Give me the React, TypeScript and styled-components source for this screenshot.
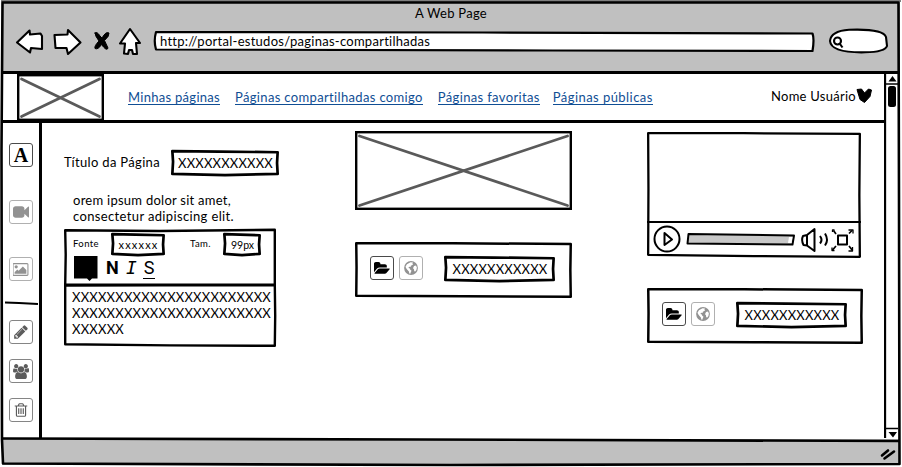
import React, { useLayoutEffect, useRef, useState } from 'react';
import styled, { createGlobalStyle } from 'styled-components';

const Global = createGlobalStyle`
  * { box-sizing: border-box; }
  body { margin: 0; background: #fff; overflow: hidden; }
`;

/* ---------- text ---------- */

const Run = styled.span<{ $size: number; $color: string; $weight: number; $underline: boolean }>`
  display: inline-block;
  font-family: Lato, "Open Sans", sans-serif;
  font-size: ${(p) => p.$size}px;
  font-weight: ${(p) => p.$weight};
  line-height: 16px;
  height: 16px;
  color: ${(p) => p.$color};
  white-space: nowrap;
  flex: none;
  border-bottom: ${(p) => (p.$underline ? `1px solid ${p.$color}` : 'none')};
`;

type TextProps = {
  children: string;
  width: number;
  size?: number;
  color?: string;
  weight?: number;
  underline?: boolean;
};

/* Tracks the letters out so that the run fills the given width. */
function Text({ children, width, size = 13, color = '#000', weight = 400, underline = false }: TextProps) {
  const ref = useRef<HTMLSpanElement>(null);
  const [spacing, setSpacing] = useState(0);
  useLayoutEffect(() => {
    const el = ref.current;
    if (!el) return;
    el.style.letterSpacing = '0px';
    const natural = el.getBoundingClientRect().width;
    const next = (width - natural) / children.length;
    el.style.letterSpacing = `${next}px`;
    setSpacing(next);
  }, [children, width, size]);
  return (
    <Run ref={ref} $size={size} $color={color} $weight={weight} $underline={underline} style={{ letterSpacing: spacing }}>
      {children}
    </Run>
  );
}

/* ---------- pen-drawn outline ---------- */

const OutlineSvg = styled.svg`
  position: absolute;
  inset: 0;
  overflow: visible;
  pointer-events: none;
`;

type Wobble = [number, number, number, number, number, number, number, number];

/* Wobble shifts: top-left, top, top-right, right, bottom-right, bottom, bottom-left, left. */
function Outline({ w, h, stroke = 3, wobble }: { w: number; h: number; stroke?: number; wobble: Wobble }) {
  const i = stroke / 2;
  const [tl, t, tr, r, br, b, bl, l] = wobble;
  const d = `M${i} ${i + tl}L${w * 0.45} ${i + t}L${w - i} ${i + tr}L${w - i + r} ${h / 2}L${w - i} ${h - i + br}L${w / 2} ${
    h - i + b
  }L${i} ${h - i + bl}L${i + l} ${h * 0.45}Z`;
  return (
    <OutlineSvg width={w} height={h}>
      <path d={d} fill="none" stroke="#000" strokeWidth={stroke} strokeLinejoin="round" />
    </OutlineSvg>
  );
}

/* ---------- browser window ---------- */

const Window = styled.div`
  width: 902px;
  height: 467px;
  padding: 2px;
  position: relative;
  display: flex;
  flex-direction: column;
  background: #fff;
`;

const Chrome = styled.header`
  height: 72px;
  flex: none;
  background: #c0c0c0;
  border-bottom: 3px solid #000;
  display: flex;
  flex-direction: column;
  padding-top: 3px;
`;

const TitleRow = styled.div`
  height: 22px;
  display: flex;
  justify-content: center;
`;

const ToolRow = styled.div`
  display: flex;
  padding-left: 13px;
  height: 34px;
`;

const NavIcons = styled.svg`
  flex: none;
  width: 138px;
  height: 34px;
`;

const Address = styled.div`
  position: relative;
  width: 661px;
  height: 20px;
  margin-top: 4px;
  padding: 1px 0 0 7px;
`;

const AddressShape = styled.svg`
  position: absolute;
  inset: 0;
  overflow: visible;
`;

const AddressText = styled.div`
  position: relative;
`;

const SearchPill = styled.svg`
  width: 60px;
  height: 28px;
  margin: 0 0 0 14px;
`;

const Body = styled.div`
  flex: 1;
  display: flex;
  min-height: 0;
  background: #fff;
`;

const Page = styled.div`
  width: 882px;
  flex: none;
  display: flex;
  flex-direction: column;
`;

const Scroll = styled.svg`
  width: 15px;
  height: 365px;
  flex: none;
`;

const StatusBar = styled.footer`
  height: 26px;
  flex: none;
  background: #c0c0c0;
  display: flex;
  justify-content: flex-end;
  align-items: center;
  padding-right: 3px;
  & > svg { margin-top: 3px; }
`;

/* ---------- page header ---------- */

const SiteHeader = styled.div`
  height: 49px;
  flex: none;
  display: flex;
  border-bottom: 3px solid #000;
  padding: 0 12px 0 15px;
`;

const Links = styled.nav`
  display: flex;
  padding: 14px 0 0 24px;
  flex: 1;
`;

const Link = styled.a<{ $gap: number }>`
  height: 16px;
  display: block;
  margin-right: ${(p) => p.$gap}px;
`;

const User = styled.div`
  display: flex;
  align-items: flex-start;
  padding-top: 14px;
`;

const PlaceholderSvg = styled.svg`
  display: block;
  flex: none;
`;

function Placeholder({ w, h }: { w: number; h: number }) {
  return (
    <PlaceholderSvg width={w} height={h}>
      <rect x="1.2" y="1.2" width={w - 2.4} height={h - 2.4} fill="#fff" stroke="#000" strokeWidth="2.4" />
      <path
        d={`M4.5 5L${w - 4.5} ${h - 4.5}M4.5 ${h - 4.5}L${w - 4.5} 5`}
        stroke="#5a5a5a"
        strokeWidth="2.8"
        strokeLinecap="round"
      />
    </PlaceholderSvg>
  );
}

/* ---------- sidebar ---------- */

const Workspace = styled.div`
  flex: 1;
  display: flex;
  min-height: 0;
`;

const Sidebar = styled.aside`
  width: 40px;
  flex: none;
  border-right: 3px solid #000;
  padding: 20px 0 0 7px;
  display: flex;
  flex-direction: column;
`;

const Tools = styled.div<{ $gap: number }>`
  display: flex;
  flex-direction: column;
  gap: ${(p) => p.$gap}px;
`;

const Divider = styled.svg`
  width: 35px;
  height: 5px;
  margin: 20px 0 14px -5px;
`;

const IconButton = styled.button<{ $tone: 'dark' | 'mid' | 'light' }>`
  width: 24px;
  height: 24px;
  padding: 0;
  flex: none;
  display: flex;
  align-items: center;
  justify-content: center;
  background: #fff;
  border-radius: 3px;
  border: 1px solid ${(p) => ({ dark: '#4a4a4a', mid: '#858585', light: '#b0b0b0' })[p.$tone]};
  color: ${(p) => ({ dark: '#000', mid: '#5c5c5c', light: '#929292' })[p.$tone]};
`;

const Serif = styled.span`
  font: bold 20px/22px "Liberation Serif", serif;
`;

const paths = {
  video:
    'M1792 352v1088q0 42-39 59-13 5-25 5-27 0-45-19l-403-403v166q0 119-84.5 203.5t-203.5 84.5h-704q-119 0-203.5-84.5t-84.5-203.5v-704q0-119 84.5-203.5t203.5-84.5h704q119 0 203.5 84.5t84.5 203.5v165l403-402q18-19 45-19 12 0 25 5 39 17 39 59z',
  image:
    'M576 576q0 80-56 136t-136 56-136-56-56-136 56-136 136-56 136 56 56 136zm1024 384v448h-1408v-192l320-320 160 160 512-512zm96-704h-1600q-13 0-22.5 9.5t-9.5 22.5v1216q0 13 9.5 22.5t22.5 9.5h1600q13 0 22.5-9.5t9.5-22.5v-1216q0-13-9.5-22.5t-22.5-9.5zm160 32v1216q0 66-47 113t-113 47h-1600q-66 0-113-47t-47-113v-1216q0-66 47-113t113-47h1600q66 0 113 47t47 113z',
  pencil:
    'M491 1536l91-91-235-235-91 91v107h128v128h107zm523-928q0-22-22-22-10 0-17 7l-542 542q-7 7-7 17 0 22 22 22 10 0 17-7l542-542q7-7 7-17zm-54-192l416 416-832 832h-416v-416zm683 96q0 53-37 90l-166 166-416-416 166-165q36-38 90-38 53 0 91 38l235 234q37 39 37 91z',
  users:
    'M593 896q-162 5-265 128h-134q-82 0-138-40.5t-56-118.5q0-353 124-353 6 0 43.5 21t97.5 42.5 119 21.5q67 0 133-23-5 37-5 66 0 159 93 293zm1071 637q0 120-73 189.5t-194 69.5h-874q-121 0-194-69.5t-73-189.5q0-53 3.5-103.5t14-109 26.5-108.5 43-97.5 62-81 85.5-53.5 111.5-20q10 0 43 21.5t73 48 107 48 135 21.5 135-21.5 107-48 73-48 43-21.5q61 0 111.5 20t85.5 53.5 62 81 43 97.5 26.5 108.5 14 109 3.5 103.5zm-1024-1277q0 106-75 181t-181 75-181-75-75-181 75-181 181-75 181 75 75 181zm704 384q0 159-112.5 271.5t-271.5 112.5-271.5-112.5-112.5-271.5 112.5-271.5 271.5-112.5 271.5 112.5 112.5 271.5zm576 225q0 78-56 118.5t-138 40.5h-134q-103-123-265-128 93-134 93-293 0-29-5-66 66 23 133 23 59 0 119-21.5t97.5-42.5 43.5-21q124 0 124 353zm-128-609q0 106-75 181t-181 75-181-75-75-181 75-181 181-75 181 75 75 181z',
  trash:
    'M704 736v576q0 14-9 23t-23 9h-64q-14 0-23-9t-9-23v-576q0-14 9-23t23-9h64q14 0 23 9t9 23zm256 0v576q0 14-9 23t-23 9h-64q-14 0-23-9t-9-23v-576q0-14 9-23t23-9h64q14 0 23 9t9 23zm256 0v576q0 14-9 23t-23 9h-64q-14 0-23-9t-9-23v-576q0-14 9-23t23-9h64q14 0 23 9t9 23zm128 724v-948h-896v948q0 22 7 40.5t14.5 27 10.5 8.5h832q3 0 10.5-8.5t14.5-27 7-40.5zm-672-1076h448l-48-117q-7-9-17-11h-317q-10 2-17 11zm928 32v64q0 14-9 23t-23 9h-96v948q0 83-47 143.5t-113 60.5h-832q-66 0-113-58.5t-47-141.5v-952h-96q-14 0-23-9t-9-23v-64q0-14 9-23t23-9h309l70-167q15-37 54-63t79-26h320q40 0 79 26t54 63l70 167h309q14 0 23 9t9 23z',
  folder:
    'M1815 952q0 31-31 66l-336 396q-43 51-120.5 86.5t-143.5 35.5h-1088q-34 0-60.5-13t-26.5-43q0-31 31-66l336-396q43-51 120.5-86.5t143.5-35.5h1088q34 0 60.5 13t26.5 43zm-343-344v160h-832q-94 0-197 47.5t-164 119.5l-337 396-5 6q0-4-.5-12.5t-.5-12.5v-960q0-92 66-158t158-66h320q92 0 158 66t66 158v32h544q92 0 158 66t66 158z',
};

function Glyph({ name, w = 16, h = 16, box = 1792 }: { name: keyof typeof paths; w?: number; h?: number; box?: number }) {
  return (
    <svg width={w} height={h} viewBox={`0 0 ${box} 1792`} fill="currentColor">
      <path d={paths[name]} />
    </svg>
  );
}

function Globe() {
  return (
    <svg width="14" height="14" viewBox="0 0 14 14">
      <circle cx="7" cy="7" r="6.900" fill="currentColor" />
      <path d="M6.500 1.200L9 1.400 8.400 2.700 9.200 3.300 7.900 4.300 6.800 4.800 6.600 6.100 5 5.700 4.500 6.900 5.600 7.300 6.300 8.800 7.500 9.700 6.800 11.300 6.300 12.800 5.300 12.500 4.900 10.400 3.300 8.800 2.200 7.200 1.500 5.700 2.900 3.200ZM10 5L12 4.500 12.900 6.500 12.400 9 11 10.800 10.100 9.800 10 8.200 9 7.300Z" fill="#fff" />
    </svg>
  );
}

/* ---------- content ---------- */

const Columns = styled.main`
  flex: 1;
  display: grid;
  grid-template-columns: 291px 292px 1fr;
  align-items: start;
  padding-left: 22px;
`;

const Column = styled.section<{ $top: number; $gap: number }>`
  display: flex;
  flex-direction: column;
  align-items: flex-start;
  gap: ${(p) => p.$gap}px;
  padding-top: ${(p) => p.$top}px;
`;

const TitleLine = styled.div`
  display: flex;
  gap: 11px;
  align-items: flex-start;
  & > span { margin-top: 4px; }
`;

const FieldBox = styled.div<{ $w: number; $h: number }>`
  position: relative;
  width: ${(p) => p.$w}px;
  height: ${(p) => p.$h}px;
  display: flex;
  align-items: center;
  justify-content: center;
  flex: none;
  padding-left: 1px;
`;

function Field({ w, h, children }: { w: number; h: number; children: React.ReactNode }) {
  return (
    <FieldBox $w={w} $h={h}>
      <Outline w={w} h={h} stroke={2.7} wobble={[-0.3, 0.2, 0.9, -0.6, -0.8, 0.5, -0.8, 0.7]} />
      {children}
    </FieldBox>
  );
}

const Lorem = styled.div`
  display: flex;
  flex-direction: column;
  align-items: flex-start;
  margin: 16px 0 0 9px;
`;

const Editor = styled.div`
  width: 212px;
  margin-top: 5px;
`;

const EditorBar = styled.div`
  position: relative;
  height: 57px;
  padding: 4px 14px 0 9px;
`;

const FontRow = styled.div`
  display: flex;
  align-items: flex-start;
  & > span { margin-top: 3px; }
`;

const Spacer = styled.div<{ $w: number }>`
  width: ${(p) => p.$w}px;
  flex: none;
`;

const StyleRow = styled.div`
  display: flex;
  height: 27px;
`;

const EditorText = styled.div`
  position: relative;
  height: 63px;
  margin-top: -2px;
  padding: 5px 0 0 8px;
  display: flex;
  flex-direction: column;
  align-items: flex-start;
`;

const StyleGlyph = styled.span<{ $kind: 'bold' | 'italic' | 'underline' }>`
  font-size: 18px;
  line-height: 24px;
  height: 23px;
  font-weight: ${(p) => (p.$kind === 'bold' ? 700 : 400)};
  font-style: ${(p) => (p.$kind === 'italic' ? 'italic' : 'normal')};
  font-family: ${(p) => (p.$kind === 'italic' ? '"DejaVu Sans Mono", monospace' : 'Roboto, sans-serif')};
  border-bottom: ${(p) => (p.$kind === 'underline' ? '1px solid #000' : 'none')};
  width: ${(p) => ({ bold: 20, italic: 17, underline: 12 })[p.$kind]}px;
  text-align: ${(p) => (p.$kind === 'underline' ? 'center' : 'left')};
`;

const SourcePanel = styled.div<{ $w: number }>`
  position: relative;
  width: ${(p) => p.$w}px;
  height: 56px;
  padding: 14px 0 0 15px;
  display: flex;
  align-items: flex-start;
  gap: 5px;
`;

function Source({ w }: { w: number }) {
  return (
    <SourcePanel $w={w}>
      <Outline w={w} h={56} stroke={2.5} wobble={[0, 0, 0.8, -0.4, 0, -0.6, -1, 0.3]} />
      <IconButton $tone="dark"><Glyph name="folder" h={15} /></IconButton>
      <IconButton $tone="light"><Globe /></IconButton>
      <Spacer $w={11} />
      <Field w={111} h={26}><Text width={95}>XXXXXXXXXXX</Text></Field>
    </SourcePanel>
  );
}

const Player = styled.div`
  position: relative;
  width: 214px;
  height: 126px;
  display: flex;
  flex-direction: column;
`;

const Screen = styled.div`
  height: 91px;
  flex: none;
  border-bottom: 2px solid #000;
`;

const Controls = styled.svg`
  width: 214px;
  height: 35px;
`;

export default function App() {
  return (
    <>
      <Global />
      <Window>
        <Chrome>
          <TitleRow><Text width={72}>A Web Page</Text></TitleRow>
          <ToolRow>
            <NavIcons viewBox="15 27 138 34" stroke="#000" strokeWidth="2.1" strokeLinejoin="round" strokeLinecap="round">
              <path fill="#fff" d="M17 37.500L29.500 25.500 30 29.500 40.500 28.500 42 31 42 44 31 43 30 47.500Z" transform="translate(0 5)" />
              <path fill="#fff" d="M54.500 30L67.500 29.500 68 25 80.500 37.500 68 49 66.500 43 55.500 43Z" transform="translate(0 5)" />
              <path fill="#fff" d="M130 24L120 38.500 125 38.500 124 48.500 128 49 129 45 132 45 133 49 137 49 136 38 140 38Z" transform="translate(0 5)" />
              <path fill="#000" strokeWidth="1" d="M95 28Q97 26 100 31L102 33Q106 26 109 28 109.500 31 104.500 35.500L108 43Q107 46 103.500 42L101.500 39.500Q98 45 95 43.500 94 41 99 36 95 31 95 28Z" transform="translate(0 5)" />
            </NavIcons>
            <Address>
              <AddressShape width="661" height="20" fill="#fff" stroke="#000" strokeWidth="2.2" strokeLinejoin="round">
                <path d="M3 1L330 1.500 659.500 2.500Q661.500 8 659.500 20L400 19.500 3 18.500Q.500 10 3 1Z" />
              </AddressShape>
              <AddressText><Text width={270}>http://portal-estudos/paginas-compartilhadas</Text></AddressText>
            </Address>
            <SearchPill viewBox="829 27 60 28" fill="#fff" stroke="#000" strokeWidth="2.1">
              <path d="M831 41Q832 31 850 29.800Q884 28.500 887 37L888 46Q886 52 866 52.300Q832 53 831 41Z" />
              <circle cx="838.500" cy="41" r="3.500" />
              <path d="M841 44L843.500 47.500" />
            </SearchPill>
          </ToolRow>
        </Chrome>
        <Body>
          <Page>
            <SiteHeader>
              <Placeholder w={87} h={47} />
              <Links>
                <Link $gap={15}><Text width={92} color="#104e94" underline>Minhas páginas</Text></Link>
                <Link $gap={15}><Text width={188} color="#104e94" underline>Páginas compartilhadas comigo</Text></Link>
                <Link $gap={13}><Text width={102} color="#104e94" underline>Páginas favoritas</Text></Link>
                <Link $gap={0}><Text width={100} color="#104e94" underline>Páginas públicas</Text></Link>
              </Links>
              <User>
                <Text width={85}>Nome Usuário</Text>
                <svg width="16" height="16" viewBox="855.5 88.5 16 16">
                  <path d="M856.500 90L861 89.500 864 93.500 868 89.500 871 90.500 869.500 97 864 103 859.500 100Z" stroke="#000" strokeLinejoin="round" />
                </svg>
              </User>
            </SiteHeader>
            <Workspace>
              <Sidebar>
                <Tools $gap={33}>
                  <IconButton $tone="dark"><Serif>A</Serif></IconButton>
                  <IconButton $tone="light"><Glyph name="video" /></IconButton>
                  <IconButton $tone="light"><Glyph name="image" h={15} box={1920} /></IconButton>
                </Tools>
                <Divider viewBox="0 0 35 5"><path d="M1 1.500L15 2 34 3" stroke="#000" strokeWidth="2" fill="none" /></Divider>
                <Tools $gap={15}>
                  <IconButton $tone="mid"><Glyph name="pencil" /></IconButton>
                  <IconButton $tone="mid"><Glyph name="users" h={15} box={1920} /></IconButton>
                  <IconButton $tone="mid"><Glyph name="trash" /></IconButton>
                </Tools>
              </Sidebar>
              <Columns>
                <Column $top={27} $gap={0}>
                  <TitleLine>
                    <Text width={96}>Título da Página</Text>
                    <Field w={108} h={26}><Text width={95}>XXXXXXXXXXX</Text></Field>
                  </TitleLine>
                  <Lorem>
                    <Text width={158}>orem ipsum dolor sit amet,</Text>
                    <Text width={161}>consectetur adipiscing elit.</Text>
                  </Lorem>
                  <Editor>
                    <EditorBar>
                      <Outline w={212} h={57} stroke={2.4} wobble={[0, 0.8, -0.4, 0, 0, 0, 0, 0.5]} />
                      <FontRow>
                        <Text width={26} size={9.5}>Fonte</Text>
                        <Spacer $w={12} />
                        <Field w={54} h={23}><Text width={40} size={11}>xxxxxx</Text></Field>
                        <Spacer $w={25} />
                        <Text width={21} size={9.5}>Tam.</Text>
                        <Spacer $w={12} />
                        <Field w={38} h={23}><Text width={23} size={10.5}>99px</Text></Field>
                      </FontRow>
                      <StyleRow>
                        <svg width="33" height="27" viewBox="0 0 33 27">
                          <path d="M1 0H24.500V22.500H19L16.500 25 14 22.500H1Z" />
                        </svg>
                        <StyleGlyph $kind="bold">N</StyleGlyph>
                        <StyleGlyph $kind="italic">I</StyleGlyph>
                        <StyleGlyph $kind="underline">S</StyleGlyph>
                      </StyleRow>
                    </EditorBar>
                    <EditorText>
                      <Outline w={212} h={63} stroke={2.4} wobble={[0.3, 0, 0, 0.4, 0, -0.4, -1.5, 0]} />
                      <Text width={199}>XXXXXXXXXXXXXXXXXXXXXXX</Text>
                      <Text width={199}>XXXXXXXXXXXXXXXXXXXXXXX</Text>
                      <Text width={52}>XXXXXX</Text>
                    </EditorText>
                  </Editor>
                </Column>
                <Column $top={8} $gap={32}>
                  <Placeholder w={217} h={79} />
                  <Source w={217} />
                </Column>
                <Column $top={9} $gap={30}>
                  <Player>
                    <Outline w={214} h={126} stroke={2.3} wobble={[0, 0, 0.8, -0.5, 0, -0.8, -2, 0.3]} />
                    <Screen />
                    <Controls viewBox="647 222 214 35" fill="none" stroke="#000" strokeWidth="2" strokeLinejoin="round">
                      <circle cx="667" cy="238" r="12.500" />
                      <path d="M664.500 232L672 238.500 664.500 244Z" />
                      <path d="M688.500 233L794 234.500 792.500 243.500 687.500 242.500Z" fill="#c8c8c8" />
                      <path d="M789 236L792.500 236 791.500 242 788 242Z" fill="#fff" stroke="none" />
                      <path d="M807 234L803 235Q801 239 803.500 244L807 244.500ZM807 234L814.500 228V250L807 244.500M820 235Q823 239 820 242.500M825 232.500Q829 239 825 244.500" />
                      <path d="M838 234.500H847V243.500H838Z" />
                      <path d="M833.500 229.500L836 233M849 232.500L852 229.500M849 245L852.500 249.500M836 245L832.500 249" strokeWidth="1.700" />
                      <path d="M832.500 231V229H834.500M848.500 229H853V232.500M848.500 250H852.500V246M832 246.500V249.500H834.500" strokeWidth="1.300" />
                    </Controls>
                  </Player>
                  <Source w={216} />
                </Column>
              </Columns>
            </Workspace>
          </Page>
          <Scroll viewBox="884 74 15 365">
            <path d="M885 74V438" stroke="#000" strokeWidth="2.300" />
            <path d="M885 84H898M885 428.500H898" stroke="#000" strokeWidth="1.500" />
            <path d="M888.500 81.500L892.500 76 896.500 81.500ZM888.500 432L897 432 893 437.500Z" />
            <rect x="888" y="86" width="8" height="21" rx="2.500" />
          </Scroll>
        </Body>
        <StatusBar>
          <svg width="17" height="16" viewBox="0 0 17 16"><path d="M2 9.500L8 4.500M4.500 12.500L14 5.500" stroke="#000" strokeWidth="2.600" strokeLinecap="round" /></svg>
        </StatusBar>
        <OutlineSvg width="902" height="467" fill="none" stroke="#000" strokeWidth="2.6" strokeLinejoin="round">
          <path d="M1 1H901" stroke="#555" strokeWidth="1.500" />
          <path d="M2.500 2.500L898.500 2.500 899 200 899.500 464 450 465 3 463.500 2 440 1.500 150Z" />
          <path d="M2 438.500L420 439.500 899 441" />
        </OutlineSvg>
      </Window>
    </>
  );
}
